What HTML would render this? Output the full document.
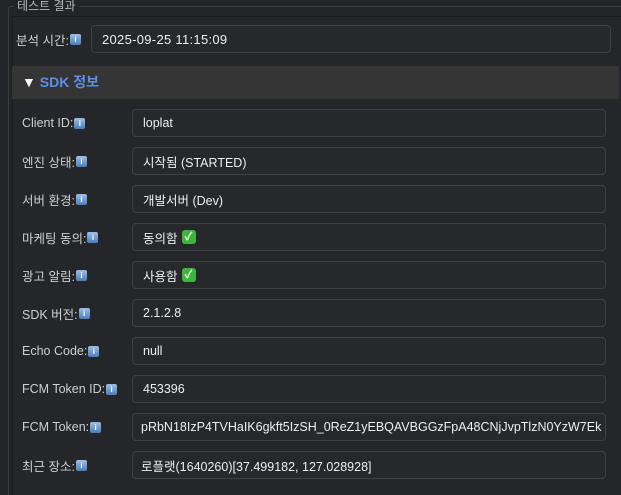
<!DOCTYPE html>
<html><head><meta charset="utf-8"><style>
html,body{margin:0;width:621px;height:495px;overflow:hidden}
body{background:#232427;font-family:"Liberation Sans","Noto Sans CJK KR",sans-serif;position:relative;color:#e6e6e6}
.a{position:absolute}
.fs{left:8px;top:6px;width:620px;height:495px;border:1px solid #3a3b3e;border-radius:3px;box-sizing:border-box;border-bottom:none}
.panel{left:12px;top:16px;width:609px;height:479px;background:#252629;border-left:1px solid #1a1b1d;border-top:1px solid #1a1b1d;box-sizing:border-box}
.lg{left:14px;top:0px;font-size:12px;line-height:13px;color:#b8b8b8;background:#232427;padding:0 3px}
.lbl{font-size:12.5px;height:16px;color:#cfcfcf;white-space:nowrap;display:flex;align-items:center}
.box{background:#27282b;border:1px solid #3f4044;border-radius:4px;box-sizing:border-box;font-size:12.5px;color:#eee;padding-left:10px;white-space:nowrap;overflow:hidden;display:flex;align-items:center}
.i{display:inline-block;width:11px;height:11px;background:linear-gradient(#9cbfe6,#4a7dbd);border-radius:2px;color:#fff;font-size:8px;line-height:11px;text-align:center;font-weight:bold;margin-left:1px;flex:none}
.chk{display:inline-block;width:14px;height:14px;background:#3fb43a;border-radius:3px;color:#fff;font-size:11px;line-height:14px;text-align:center;margin-left:4px;font-weight:bold;flex:none}
.hdr{left:12px;top:66px;width:607px;height:33px;background:#353535}
</style></head><body>
<div class="a fs"></div>
<div class="a panel"></div>
<div class="a lg">테스트 결과</div>
<div class="a lbl" style="left:16px;top:31px">분석 시간:<span class="i">i</span></div>
<div class="a box" style="left:91px;top:25px;width:520px;height:28px;font-size:13px;letter-spacing:.3px">2025-09-25 11:15:09</div>
<div class="a hdr"></div>
<div class="a" style="left:22px;top:74px;font-size:14px;line-height:17px;font-weight:bold;color:#fff">▼ <span style="color:#5b8ef0">SDK 정보</span></div>

<div class="a lbl" style="left:22px;top:115px">Client ID:<span class="i">i</span></div>
<div class="a box" style="left:132px;top:109px;width:474px;height:28px">loplat</div>
<div class="a lbl" style="left:22px;top:153px">엔진 상태:<span class="i">i</span></div>
<div class="a box" style="left:132px;top:147px;width:474px;height:28px">시작됨 (STARTED)</div>
<div class="a lbl" style="left:22px;top:191px">서버 환경:<span class="i">i</span></div>
<div class="a box" style="left:132px;top:185px;width:474px;height:28px">개발서버 (Dev)</div>
<div class="a lbl" style="left:22px;top:229px">마케팅 동의:<span class="i">i</span></div>
<div class="a box" style="left:132px;top:223px;width:474px;height:28px">동의함<span class="chk">✓</span></div>
<div class="a lbl" style="left:22px;top:267px">광고 알림:<span class="i">i</span></div>
<div class="a box" style="left:132px;top:261px;width:474px;height:28px">사용함<span class="chk">✓</span></div>
<div class="a lbl" style="left:22px;top:305px">SDK 버전:<span class="i">i</span></div>
<div class="a box" style="left:132px;top:299px;width:474px;height:28px">2.1.2.8</div>
<div class="a lbl" style="left:22px;top:343px">Echo Code:<span class="i">i</span></div>
<div class="a box" style="left:132px;top:337px;width:474px;height:28px">null</div>
<div class="a lbl" style="left:22px;top:381px">FCM Token ID:<span class="i">i</span></div>
<div class="a box" style="left:132px;top:375px;width:474px;height:28px">453396</div>
<div class="a lbl" style="left:22px;top:419px">FCM Token:<span class="i">i</span></div>
<div class="a box" style="left:132px;top:413px;width:474px;height:28px;padding-left:8px">pRbN18IzP4TVHaIK6gkft5IzSH_0ReZ1yEBQAVBGGzFpA48CNjJvpTlzN0YzW7Ek</div>
<div class="a lbl" style="left:22px;top:457px">최근 장소:<span class="i">i</span></div>
<div class="a box" style="left:132px;top:451px;width:474px;height:28px;padding-left:8px">로플랫(1640260)[37.499182, 127.028928]</div>
</body></html>
